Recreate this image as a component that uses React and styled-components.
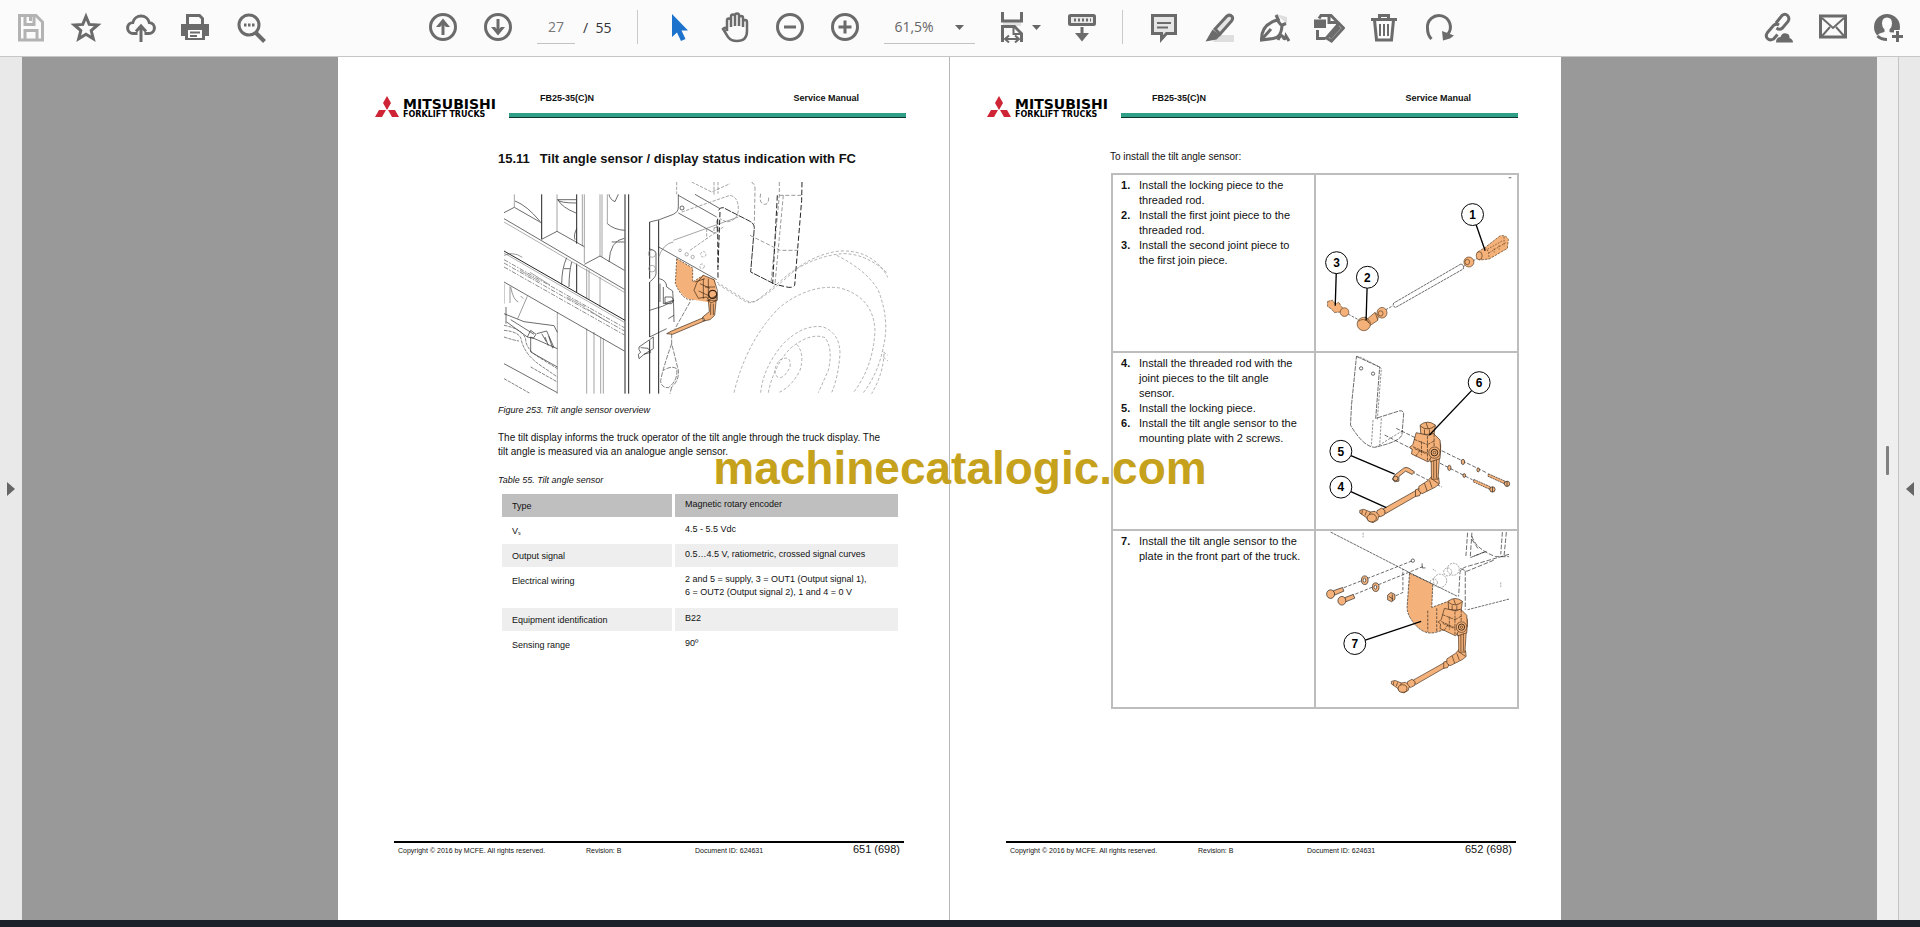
import React from 'react'
import styled, { createGlobalStyle } from 'styled-components'

const GlobalStyle = createGlobalStyle`
  * {
    box-sizing: border-box;
  }
  body {
    margin: 0;
    font-family: 'Liberation Sans', Arial, sans-serif;
    color: #111;
    background-color: #999;
  }
`
const Window = styled.div`
  position: relative;
  display: flex;
  flex-direction: column;
  height: 100vh;
  overflow: hidden;
`

/* toolbar */
const Toolbar = styled.header`
  display: flex;
  align-items: center;
  flex: none;
  height: 57px;
  padding: 0 5px 2px 3px;
  background-color: #fbfbfb;
  border-bottom: 1px solid #c6c6c6;
`
const ToolGroup = styled.div`
  display: flex;
  align-items: center;
  margin-left: ${(props) => props.$space || '0'};
`
const ToolButton = styled.button`
  display: flex;
  align-items: center;
  justify-content: center;
  gap: 4px;
  width: ${(props) => (props.$wide ? '72px' : '55px')};
  height: 40px;
  padding: 0;
  border: 0;
  background: none;
  color: ${(props) => props.$color || '#6b6b6b'};
`
const Icon = styled.svg`
  display: block;
  flex: none;
  width: 32px;
  height: 32px;
  fill: none;
  stroke: currentColor;
  stroke-width: 3;
`
const Caret = styled.svg`
  display: block;
  flex: none;
  width: 9px;
  height: 5px;
  fill: #666;
`
const Separator = styled.div`
  width: 1px;
  height: 34px;
  margin: ${(props) => props.$margin};
  background-color: #c9c9c9;
`
const PageInput = styled.input`
  width: 38px;
  height: 34px;
  margin: 0 8px 0 12px;
  padding: 0;
  border: 0;
  border-bottom: 1px solid #c2c2c2;
  background: none;
  color: #777;
  font: 14px 'Open Sans', sans-serif;
  text-align: center;
`
const PageTotal = styled.span`
  color: #333;
  font: 14px 'Open Sans', sans-serif;
  white-space: pre;
`
const ZoomField = styled.div`
  display: flex;
  align-items: center;
  position: relative;
  margin: 0 7px 0 12px;

  ${Caret} {
    position: absolute;
    right: 11px;
    pointer-events: none;
  }
`
const ZoomSelect = styled.select`
  width: 91px;
  height: 34px;
  padding: 0 0 0 10px;
  border: 0;
  border-bottom: 1px solid #c2c2c2;
  border-radius: 0;
  appearance: none;
  background: none;
  color: #666;
  font: 14px 'Open Sans', sans-serif;
`

/* document area */
const Workspace = styled.main`
  display: flex;
  flex: 1;
  min-height: 0;
`
const SidePanel = styled.aside`
  display: flex;
  align-items: center;
  justify-content: center;
  flex: none;
  width: 22px;
  background-color: #e9e9e9;
  border-left: ${(props) => (props.$line ? '1px solid #c4c4c4' : '0')};
`
const PanelToggle = styled.button`
  padding: 0;
  border: 0;
  background: none;
`
const PanelArrow = styled.svg`
  display: block;
  width: 8px;
  height: 14px;
  fill: #666;
`
const Scrollbar = styled.div`
  flex: none;
  width: 21px;
  padding-top: 389px;
  background-color: #efefef;
`
const Thumb = styled.div`
  width: 3px;
  height: 29px;
  margin: 0 auto;
  border-radius: 1px;
  background-color: #808080;
`
const Desk = styled.div`
  display: flex;
  justify-content: center;
  flex: 1;
  min-width: 0;
  background-color: #999;
`
const Spread = styled.div`
  display: flex;
  width: 100%;
  max-width: 1223px;
  background-color: #fff;
`
const Page = styled.article`
  display: flex;
  flex-direction: column;
  flex: 1;
  min-width: 0;

  & + & {
    border-left: 1px solid #b8b8b8;
  }
`
const PageHeader = styled.div`
  display: flex;
  align-items: flex-end;
  gap: 11px;
  padding: 35px 43px 0 37px;
`
const Logo = styled.svg`
  flex: none;
  width: 123px;
  height: 23px;
`
const HeaderInfo = styled.div`
  flex: 1;
  border-bottom: 1px solid #10332d;
`
const HeaderText = styled.div`
  display: flex;
  justify-content: space-between;
  padding: 0 47px 9px 31px;
  border-bottom: 4px solid #2f9f87;
  font-size: 9px;
  font-weight: bold;
  line-height: 12px;
`
const PageBody = styled.section`
  padding: 32px 43px 0 160px;
`
const Heading = styled.h2`
  display: flex;
  gap: 10px;
  margin: 0;
  font-size: 13px;
  line-height: 18px;
`
const Figure = styled.figure`
  margin: 0;
`
const Overview = styled.svg`
  display: block;
  width: calc(100% - 24px);
  margin: 14px 0 10px 6px;
`
const Caption = styled.figcaption`
  font-size: 9px;
  font-style: italic;
  line-height: 12px;
`
const Text = styled.p`
  margin: ${(props) => props.$margin || '0'};
  font-size: 10px;
  line-height: 14px;
`
const SpecTable = styled.table`
  width: calc(100% - 6px);
  margin: 0 5px 0 1px;
  border-spacing: 3px 2px;
  font-size: 9px;
  line-height: 13px;

  caption {
    margin: 0 0 6px -1px;
    font-style: italic;
    line-height: 12px;
    text-align: left;
  }
`
const SpecRow = styled.tr`
  height: ${(props) => (props.$tall ? '37px' : '23px')};
  background-color: ${(props) => props.$bg || 'transparent'};
`
const SpecName = styled.th`
  width: 170px;
  padding: 6px 10px 0;
  font-weight: normal;
  text-align: left;
  vertical-align: top;
`
const SpecValue = styled.td`
  padding: 4px 10px 0;
  vertical-align: top;
`
const StepTable = styled.table`
  width: 100%;
  margin: 9px 0 0 1px;
  border-collapse: collapse;
  table-layout: fixed;
`
const StepCell = styled.td`
  height: 178px;
  padding: 0;
  border: 2px solid #bdbdbd;
  vertical-align: top;
`
const StepList = styled.ol`
  margin: 0;
  padding: 3px 8px;
  list-style: none;
  font-size: 11px;
  line-height: 15px;
`
const Step = styled.li`
  display: flex;

  b {
    flex: none;
    width: 18px;
  }
`
const Drawing = styled.svg`
  display: block;
  width: 100%;
  height: 176px;
  fill: none;
  stroke: #222;
  stroke-width: 2;
`
const PageFooter = styled.footer`
  display: grid;
  grid-template-columns: 188px 109px 1fr auto;
  align-items: baseline;
  margin: auto 45px 63px 56px;
  padding: 0 4px;
  border-top: 2px solid #000;
  font-size: 7px;
  line-height: 12px;
`
const PageNumber = styled.span`
  font-size: 11px;
`
const Watermark = styled.div`
  position: absolute;
  top: 442px;
  left: 0;
  right: 0;
  color: #c6a21c;
  font-size: 46px;
  font-weight: bold;
  line-height: 52px;
  text-align: center;
  pointer-events: none;
`
const Taskbar = styled.div`
  flex: none;
  height: 7px;
  background-color: #1d2129;
`

const ORANGE = '#f4b27a'

const icons = {
  save: (
    <>
      <path d="M4.500 4.500h16.500l6.500 6.500v18h-23z" />
      <path d="M10 5v8.500h9v-8.500M15.500 6v4M10 29v-9.500h12v9.500" />
    </>
  ),
  star: <path d="M16 5.500l3.200 7.900 8.500.6-6.500 5.500 2.100 8.300-7.300-4.600-7.300 4.600 2.100-8.300-6.500-5.500 8.500-.6z" />,
  upload: (
    <>
      <path d="M12.500 22.500H8.500a5.500 5.500 0 0 1-.7-11a8.500 8.500 0 0 1 16.500 0a5.500 5.500 0 0 1-.8 11h-4" />
      <path d="M16 31V16M11 20.500l5-5.500 5 5.500" />
    </>
  ),
  print: (
    <>
      <path d="M7.500 13V4.500h12l3 3V13" />
      <path d="M1 13h28v12h-4v4H5v-4H1z" fill="currentColor" stroke="none" />
      <path d="M8 19h14v8H8z" fill="#fff" stroke="none" />
      <path d="M10 21.500h10M10 25h7" strokeWidth="2" />
    </>
  ),
  search: (
    <>
      <circle cx="14" cy="14" r="10" />
      <path d="M20.500 21.500l9 9" strokeWidth="4" />
      <path d="M9 14h2.500M13 14h2.500M17 14h2.500" />
    </>
  ),
  up: (
    <>
      <circle cx="16" cy="16" r="12.500" />
      <path d="M16 24V12" />
      <path d="M9 16l7-8.500 7 8.500h-4l-3-3-3 3z" fill="currentColor" stroke="none" />
    </>
  ),
  down: (
    <>
      <circle cx="16" cy="16" r="12.500" />
      <path d="M16 8v12" />
      <path d="M9 16l7 8.500 7-8.500h-4l-3 3-3-3z" fill="currentColor" stroke="none" />
    </>
  ),
  cursor: <path d="M8 3l16 16.500h-6.500l4 8.500-4.500 2-4-8.500L8 26z" fill="currentColor" stroke="none" />,
  hand: (
    <path
      d="M8 20V9.500a2 2 0 0 1 4 0V16V5.500a2 2 0 0 1 4 0V15V4.500a2 2 0 0 1 4 0V15V7a2 2 0 0 1 4 0V16V11a2 2 0 0 1 4 0V20q0 10-10 10q-6 0-9-4l-5-8q3-3 4 2z"
      strokeWidth="2.500"
    />
  ),
  minus: (
    <>
      <circle cx="16" cy="16" r="12.500" />
      <path d="M10 16h12" />
    </>
  ),
  plus: (
    <>
      <circle cx="16" cy="16" r="12.500" />
      <path d="M9.500 16h13M16 9.500v13" />
    </>
  ),
  fit: (
    <>
      <path d="M7 11h18v4H7z" fill="#e2e2e2" stroke="none" />
      <path d="M6.500 1v9h19V1M6.500 31V15.500h12l7 7V31" />
      <path d="M17.500 15v8h8M10 28h12M13 24.500l-4 3.500 4 3.500M19 24.500l4 3.500-4 3.500" strokeWidth="2" />
    </>
  ),
  keyboard: (
    <>
      <rect x="3.500" y="4.500" width="25" height="9" rx="1" fill="#e8e8e8" />
      <path d="M8 9h2M12 9h2M16 9h2M20 9h2M24 9h1M16 16v10" />
      <path d="M9 22h14l-7 8.500z" fill="currentColor" stroke="none" />
    </>
  ),
  comment: (
    <>
      <path d="M4.500 4.500h23v18h-9l-5 5.500v-5.500h-9z" fill="#e6e6e6" />
      <path d="M9 12h14M9 16.500h11" strokeWidth="2" />
    </>
  ),
  highlight: (
    <>
      <path d="M12 24h19v7H10z" fill="#dedede" stroke="none" />
      <path d="M12 18L24 5q3-2 5 0.500q1.500 2-.5 4.500L17 23z" fill="#e4e4e4" />
      <path d="M9.500 18.500l8 6-4 4-11 2z" fill="currentColor" stroke="none" />
    </>
  ),
  sign: (
    <>
      <path d="M18 3l11 10V6z" fill="#dedede" stroke="none" />
      <path d="M18 4l3 6M28 12.500l-5 2M19 9l5 6q-1 12-9 12.500L3.500 29Q3 14 19 9z" />
      <path d="M4 28l9-10M20 29q3-7 5-3t3-1l3 5" strokeWidth="3" />
    </>
  ),
  stamp: (
    <>
      <path d="M1 8.500h12v8.500H1z" fill="currentColor" stroke="none" />
      <path d="M6 7.500L8 4.500h10l6.500 6.500v3M16 4.500v7h8M4.500 19v8.500h8" />
      <path d="M26 12.500l4.500 4.500-12 13-5-3zM17 27l10-11" strokeWidth="3" />
    </>
  ),
  trash: (
    <>
      <path d="M3 8.500h26M11.500 7V4.500h9V7M6.500 9l2 20h15l2-20" />
      <path d="M12 13v12M16 13v12M20 13v12" strokeWidth="2" />
    </>
  ),
  rotate: (
    <>
      <path d="M8.500 28Q4.500 24 4.500 17.500A11.500 11.500 0 1 1 25 23" />
      <path d="M19 20l12 4.500-4 3-7 2z" fill="currentColor" stroke="none" />
    </>
  ),
  link: (
    <>
      <path d="M14 12l6-7.500q3-2.500 5.500 0t.5 6l-5.500 6.500q-3 2.500-6 0M17 14q-3-2-5.500.5l-6 7q-2.500 3.500 0 6t6 .5l4-4.500" />
      <path d="M14 31.500q0-5 4.500-5.500q1.500-5 6-3.500q3.500 1 3 4.500q3.500 1 3.500 4.500z" fill="currentColor" stroke="none" />
    </>
  ),
  mail: (
    <>
      <rect x="3.500" y="5" width="25" height="21" />
      <path d="M5 7l11 10L27 7M5 25l8-9M27 25l-8-9" strokeWidth="2" />
    </>
  ),
  user: (
    <>
      <circle cx="15" cy="16" r="13" fill="currentColor" stroke="none" />
      <path
        d="M15 6.500q5 0 5 6q0 4-2.500 6v2.500q6 1 7.500 4q-4 4.500-10 4.500t-10-4.500q1.500-3 7.500-4v-2.500q-2.500-2-2.500-6q0-6 5-6z"
        fill="#fbfbfb"
        stroke="none"
      />
      <path d="M5.500 25Q9 28.500 15 28.500" />
      <path d="M25.500 19v12M19.500 25h12" stroke="#fbfbfb" strokeWidth="7" />
      <path d="M25.500 20v11M20 25.500h11" />
    </>
  ),
}

function Tool({ name, label, color, caret }) {
  return (
    <ToolButton type="button" aria-label={label} $color={color} $wide={caret}>
      <Icon viewBox="0 0 32 32">{icons[name]}</Icon>
      {caret && (
        <Caret viewBox="0 0 9 5">
          <path d="M0 0h9L4.500 5z" />
        </Caret>
      )}
    </ToolButton>
  )
}

function TopBar() {
  return (
    <Toolbar>
      <ToolGroup>
        <Tool name="save" label="Save" color="#b3b3b3" />
        <Tool name="star" label="Bookmark" />
        <Tool name="upload" label="Upload" />
        <Tool name="print" label="Print" />
        <Tool name="search" label="Find" />
      </ToolGroup>
      <ToolGroup $space="137px">
        <Tool name="up" label="Previous page" />
        <Tool name="down" label="Next page" />
        <PageInput aria-label="Page" defaultValue="27" />
        <PageTotal>{'/  55'}</PageTotal>
        <Separator $margin="0 14px 0 26px" />
        <Tool name="cursor" label="Select" color="#1d72cc" />
        <Tool name="hand" label="Pan" />
        <Tool name="minus" label="Zoom out" />
        <Tool name="plus" label="Zoom in" />
        <ZoomField>
          <ZoomSelect aria-label="Zoom">
            <option>61,5%</option>
          </ZoomSelect>
          <Caret viewBox="0 0 9 5">
            <path d="M0 0h9L4.500 5z" />
          </Caret>
        </ZoomField>
        <Tool name="fit" label="Fit page" caret />
        <Tool name="keyboard" label="Read mode" />
        <Separator $margin="0 13px" />
        <Tool name="comment" label="Comment" />
        <Tool name="highlight" label="Highlight" />
        <Tool name="sign" label="Sign" />
        <Tool name="stamp" label="Edit pages" />
        <Tool name="trash" label="Delete" />
        <Tool name="rotate" label="Rotate" />
      </ToolGroup>
      <ToolGroup $space="auto">
        <Tool name="link" label="Share link" />
        <Tool name="mail" label="Send by mail" />
        <Tool name="user" label="Invite" />
      </ToolGroup>
    </Toolbar>
  )
}

function BrandLogo() {
  return (
    <Logo viewBox="0 0 123 23">
      <path d="M12 1l4 7-4 7-4-7zM11 15l-4 7H0l4-7zM13 15l4 7h7l-4-7z" fill="#cf2435" />
      <g fontFamily="DejaVu Sans, sans-serif" fontWeight="bold" fill="#000">
        <text x="28" y="14" fontSize="14">MITSUBISHI</text>
        <text x="28" y="22" fontSize="8">FORKLIFT TRUCKS</text>
      </g>
    </Logo>
  )
}

function ManualPage({ number, children }) {
  return (
    <Page>
      <PageHeader>
        <BrandLogo />
        <HeaderInfo>
          <HeaderText>
            <span>FB25-35(C)N</span>
            <span>Service Manual</span>
          </HeaderText>
        </HeaderInfo>
      </PageHeader>
      <PageBody>{children}</PageBody>
      <PageFooter>
        <span>Copyright © 2016 by MCFE. All rights reserved.</span>
        <span>Revision: B</span>
        <span>Document ID: 624631</span>
        <PageNumber>{number} (698)</PageNumber>
      </PageFooter>
    </Page>
  )
}

function TruckDrawing() {
  return (
    <Overview viewBox="42 125 1152 635" fill="none" stroke="#222" strokeWidth="2">
      {/* mast rails */}
      <path d="M155 162V297M260 162V310M260 370V455M405 162V760M416 162V760M506 240V760M479 245V415M479 425V590M479 600V760" strokeWidth="3" />
      <path
        d="M73 162V200M201 162V273M283 162V368M277 162V318M330 162V348M336 162V350M352 162V250M202 515V760M290 565V760M332 590V760M340 595V760M290 385V475M297 388V478M330 410V500M312 575V760"
        stroke="#777"
      />
      {/* cross beams */}
      <path d="M42 217L73 201L155 248M155 297L201 273L283 319M283 372L330 347L403 390M42 235L403 447M42 425L403 632M42 670L202 757" />
      <path d="M42 332L405 540" strokeWidth="3" />
      <path d="M42 245L403 456M42 338L403 546" stroke="#888" />
      <path d="M42 358L403 562M42 368L403 572M42 380L403 584" stroke="#555" strokeDasharray="14 4 5 4" />
      <path d="M90 390l60 34M120 396l60 38M230 470l55 30M290 505l60 38" stroke="#777" />
      {/* chassis behind the rails */}
      <path d="M75 182Q110 195 150 243M203 178h55M203 178q6 10 55 10M203 178q14 24 55 40M255 298Q250 285 260 265M215 432Q215 385 230 352M237 440Q237 395 245 365M222 385h18M352 250q20 18 52 20M357 162q2 15 18 22l10-22M357 365Q360 300 403 294M365 305h38" />
      <path d="M42 430v60M60 438v50M62 440Q70 480 85 485M83 535L112 468M100 475l-8-8M42 345q20-10 40-2l15 8" stroke="#666" />
      <path d="M42 520l60 24 90 12 10 20M48 500v50M50 545L112 590M62 538L132 582M112 590l10-20 16 12-8 12zM122 590V635L202 680M122 590L202 625M140 580l30-8 22 50M155 580l14 24M165 590l10 26M176 588l12 36" />
      <path d="M42 555q60 12 65 44q2 28 40 52l55 34M42 570q50 5 52 30q10 40 50 70l58 40M42 590q30 10 45 12M122 680L202 725M42 715L118 758" strokeDasharray="10 3" stroke="#444" />
      {/* front plate and bracket */}
      <path d="M479 245L508 238L550 222Q565 215 565 200V162M565 165L680 230M565 218L670 276M615 162L690 205M479 425Q498 410 498 400V340Q498 330 479 326M479 510Q520 500 550 482M506 320L680 418" />
      <path d="M550 300L745 230M506 350Q520 310 550 305" stroke="#777" />
      <circle cx="576" cy="203" r="6" />
      <path d="M560 125V162M605 125L665 155L720 130M672 125V165M684 125V160M575 215L720 165Q745 170 745 205Q745 240 710 245L690 235M600 330L700 260M650 265v30M680 240v30M672 262h10v16h-10z" strokeDasharray="10 4" stroke="#777" />
      <path d="M683 235L684 415M690 215L684 380" strokeWidth="3" strokeDasharray="16 7" />
      <path d="M686 210Q690 200 700 202L780 243Q793 250 793 262L782 395L855 432" strokeWidth="3" strokeDasharray="20 3" stroke="#333" />
      <path d="M784 125Q796 130 795 150L793 250M868 125V165L843 430M880 165L855 430M812 160q-6 30 12 32q12 0 12-20M868 165h68M780 285L870 330H925" stroke="#666" strokeDasharray="12 6" />
      <path d="M936 125L935 180L914 435Q910 442 895 441L855 432M862 165L848 430" strokeWidth="3" strokeDasharray="16 7" />
      {/* bolts */}
      <g stroke="#888">
        <circle cx="570" cy="330" r="4" />
        <circle cx="590" cy="342" r="5" />
        <circle cx="608" cy="350" r="5" />
        <circle cx="640" cy="342" r="8" strokeDasharray="8 4" />
        <circle cx="636" cy="378" r="7" strokeDasharray="8 4" />
        <circle cx="486" cy="340" r="11" />
        <circle cx="486" cy="385" r="10" />
      </g>
      {/* lower bracket and latch */}
      <path d="M508 415Q530 420 530 440L548 452Q552 500 552 545M510 430v55M520 440v50l30-10M525 470h20l6 10-6 10h-20zM535 535L552 525M479 590L530 565M447 620L479 598L490 590V625L462 642L447 655L445 642L452 636L447 628zM452 622l22 2 8 12-20 6" />
      <path d="M545 580V610L565 690Q568 720 545 740M545 610Q520 680 512 720Q512 742 535 742Q565 720 560 685Q545 675 520 690M545 740L540 760M600 485L555 565" strokeDasharray="14 4" stroke="#444" />
      {/* front wheel */}
      <g stroke="#888" strokeDasharray="9 6">
        <path d="M680 425L760 475Q780 492 805 478Q850 450 920 385Q980 340 1050 332Q1150 328 1194 412" />
        <path d="M684 432L765 483Q785 495 812 472L900 398Q980 345 1060 340Q1130 340 1194 400" />
        <path d="M1040 345Q1130 390 1165 450Q1200 540 1180 620Q1165 700 1118 760M1182 640Q1180 700 1145 760" />
        <path d="M732 757Q770 600 870 500Q960 430 1050 443Q1150 470 1155 570Q1150 680 1090 757" />
        <path d="M812 757Q820 680 880 610Q940 550 1000 560Q1050 580 1050 640Q1045 710 1025 757" />
        <path d="M835 757Q850 680 900 625Q960 575 1005 592Q1030 625 1015 690L985 757" />
        <path d="M920 612Q945 640 930 690Q905 740 865 757M868 660Q905 640 900 680Q880 720 862 710Q845 690 868 660" />
        <path d="M1180 635l14 10M1180 650l14 12" />
      </g>
      {/* highlighted sensor */}
      <g fill={ORANGE} stroke="#3a2412">
        <path d="M560 355L608 383V425L640 405L675 418L680 460L672 488L610 478Q580 480 556 430z" stroke="none" />
        <path d="M655 480L680 465L674 525L660 538L640 542L638 530L658 514zM640 532L545 572L530 580L548 582L645 541z" />
        <path d="M560 355L556 430Q580 485 610 478M560 355L608 383V425L640 405" fill="none" strokeDasharray="6 4" />
        <path d="M640 405L672 418L682 450V480L662 488L650 470L625 474L612 450L620 428zM630 430l30 14M626 452l30 14M640 415v60M655 415v60M645 440h30M615 425l30-10M650 480h28M662 490v34M670 490v34" fill="none" />
        <circle cx="668" cy="462" r="12" fill="none" strokeWidth="4" />
      </g>
    </Overview>
  )
}

function Callout({ x, y, to, children }) {
  return (
    <g stroke="#000" strokeWidth="3">
      <path d={`M${x} ${y}L${to}`} strokeWidth="4" />
      <circle cx={x} cy={y} r="33" fill="#fff" />
      <text x={x} y={y + 13} fill="#000" stroke="none" fontSize="36" fontWeight="bold" textAnchor="middle">
        {children}
      </text>
    </g>
  )
}

function SensorUnit({ transform }) {
  return (
    <g transform={transform} fill={ORANGE} stroke="#3a2412">
      {/* rod and ball joint */}
      <path d="M850 478L955 419L962 432L858 492z" />
      <path d="M832 483l14-8 10 8-1 12-14 7-10-8zM948 420l12-4 6 10-6 12-12 2z" />
      <path d="M780 482l12-3 20 8 14-2 12 12-4 14-14 8-14-5-6-10-20-14zM788 482l-2 12M800 485l-4 12M812 487l-4 12" />
      <ellipse cx="816" cy="505" rx="14" ry="12" />
      {/* arm */}
      <path d="M958 410l28-18 12-14 20 6 2 18-12 10-40 20-10-8zM975 400l8 24M990 392l8 22M998 388l20 14" />
      <path d="M995 310h26l-5 78h-20zM1003 325v60M1011 325v60" />
      {/* housing */}
      <path d="M988 262q30-4 36 24l-2 40-30 10z" />
      <path d="M962 225q22-18 46 0l-4 28h-40z" />
      <path d="M962 228q24 18 46-2M975 238v16M990 238v16M980 218l6 18" />
      <path d="M950 248l38 8 14-6 20 20 2 36-14 10-8-4-16 24-50-24 2-14-8-6 10-8z" />
      <path d="M944 268l40 16M940 290l44 20M984 258v74M966 274v42M945 296l36 16M984 284l22-12M962 300l-14 20M1004 252v36" strokeDasharray="10 3" />
      <circle cx="1005" cy="308" r="17" />
      <circle cx="1005" cy="308" r="10" strokeWidth="3" />
      <circle cx="1005" cy="308" r="4" />
    </g>
  )
}

function RodDrawing() {
  return (
    <Drawing viewBox="648 105 606 528">
      <path d="M1229 112h8" />
      <path d="M1090 381L1160 340M745 523L785 545M858 510L880 498" strokeDasharray="8 4" />
      <path d="M1085 372L882 490Q878 500 888 503L1092 387Q1095 374 1085 372z" fill="#fff" strokeDasharray="9 2" />
      <g fill={ORANGE} stroke="#5a3a1c">
        <path d="M1135 336L1158 322L1203 287Q1222 284 1228 298L1225 325L1170 357L1140 360z" strokeDasharray="8 3" />
        <path d="M1158 322l10 14 2 20M1165 328l45-26M1170 338l50-30M1185 325v12M1200 316v12M1215 290v28" strokeDasharray="5 4" />
        <ellipse cx="1140" cy="347" rx="9" ry="12" />
        <circle cx="1109" cy="366" r="15" />
        <ellipse cx="1104" cy="366" rx="7" ry="8" />
        <path d="M683 485l14-4 10 12 10-6 6 12 6 6-8 12-18 1-8-10-12-8z" strokeDasharray="9 2" />
        <circle cx="734" cy="517" r="13" />
        <path d="M800 540l26-22 10 10-2 14-24 16z" />
        <circle cx="792" cy="553" r="20" />
        <path d="M775 545q18-14 34 6M796 530l14 22M826 518l8 22" />
        <ellipse cx="847" cy="519" rx="15" ry="16" />
        <ellipse cx="843" cy="521" rx="7" ry="8" />
      </g>
      <Callout x={1120} y={223} to="1158 332">1</Callout>
      <Callout x={710} y={368} to="706 498">3</Callout>
      <Callout x={803} y={412} to="799 542">2</Callout>
    </Drawing>
  )
}

function Screw({ x, y }) {
  return (
    <g transform={`translate(${x} ${y})`} fill={ORANGE}>
      <path d="M0 0L50 22L48 30L-2 7z" strokeDasharray="6 2" />
      <circle cx="56" cy="30" r="8" />
      <path d="M56 22v16" />
    </g>
  )
}

function SensorDrawing() {
  return (
    <Drawing viewBox="648 9 606 528">
      <path d="M770 18L840 50L828 205L900 182Q914 180 912 195L907 255Q900 275 825 292Q790 290 752 225L755 165z" strokeDasharray="14 3" />
      <path d="M770 18Q780 16 845 54L833 208M820 210L815 288M845 205L840 285M828 292L912 240" strokeDasharray="7 4" stroke="#555" />
      <circle cx="784" cy="54" r="5" />
      <circle cx="820" cy="70" r="5" />
      <path d="M890 235L1165 370M855 255L1120 390M935 365L1028 412" strokeDasharray="12 5" />
      <SensorUnit />
      <path d="M885 376L912 355Q920 350 928 355L945 366L938 374L918 364L898 380V394L885 396L878 388z" fill={ORANGE} />
      <circle cx="888" cy="386" r="7" fill={ORANGE} />
      <Callout x={1140} y={97} to="990 255">6</Callout>
      <Callout x={723} y={304} to="885 373">5</Callout>
      <Callout x={723} y={412} to="860 474">4</Callout>
      <g fill={ORANGE}>
        <ellipse cx="1050" cy="354" rx="5" ry="8" />
        <ellipse cx="1091" cy="336" rx="5" ry="8" />
        <ellipse cx="1095" cy="377" rx="4" ry="6" />
        <ellipse cx="1137" cy="360" rx="4" ry="6" />
      </g>
      <Screw x={1168} y={372} />
      <Screw x={1124} y={389} />
    </Drawing>
  )
}

function MountDrawing() {
  return (
    <Drawing viewBox="648 36 606 528">
      <path d="M692 38L940 165L1075 232" strokeDasharray="9 2" />
      <path d="M690 222L940 124M725 242L975 140M875 236L910 220V150" strokeDasharray="10 5" />
      <path d="M1105 272L1230 240" strokeDasharray="8 3" />
      <path d="M1105 40L1100 110M1118 40L1113 115L1165 95M1118 50Q1130 90 1190 112H1230M1118 60l20 30M1125 110l30-12M1222 38L1215 110M1210 38L1205 105M1230 105L1110 140Q1085 145 1082 160L1078 232M1098 155V272M1083 148l20 8 85-35" strokeDasharray="14 5" />
      <g stroke="#777" strokeDasharray="6 3">
        <circle cx="1062" cy="150" r="18" />
        <circle cx="1045" cy="158" r="12" />
        <circle cx="1022" cy="185" r="20" />
        <circle cx="1003" cy="190" r="11" />
        <path d="M790 40v14M1205 190v14M1000 150l10 6" />
      </g>
      <circle cx="940" cy="124" r="5" />
      <path d="M968 132v14h10" />
      <g fill={ORANGE}>
        <path d="M700 215L728 205L732 216L704 228zM734 236L760 226L765 237L738 248z" />
        <ellipse cx="692" cy="225" rx="12" ry="13" />
        <ellipse cx="726" cy="245" rx="12" ry="13" />
        <ellipse cx="795" cy="183" rx="10" ry="13" />
        <ellipse cx="794" cy="183" rx="4" ry="6" fill="#fff" />
        <ellipse cx="828" cy="204" rx="10" ry="13" />
        <ellipse cx="827" cy="204" rx="4" ry="6" fill="#fff" />
        <path d="M864 228l10-8 12 6v14l-10 8-12-6zM868 232l12 8M878 226v20" />
        <path d="M930 162L1000 195L997 265L1065 240L1075 320L1010 340Q975 350 945 315Q920 285 923 260z" strokeDasharray="8 3" />
        <path d="M985 275V338M1012 268V338" fill="none" strokeDasharray="8 4" />
      </g>
      <SensorUnit transform="translate(142 35) scale(.94)" />
      <Callout x={765} y={374} to="965 307">7</Callout>
    </Drawing>
  )
}

const specs = [
  { name: 'Type', value: 'Magnetic rotary encoder', bg: '#bfbfbf' },
  { name: 'Vₛ', value: '4.5 - 5.5 Vdc' },
  { name: 'Output signal', value: '0.5…4.5 V, ratiometric, crossed signal curves', bg: '#eee' },
  {
    name: 'Electrical wiring',
    value: (
      <>
        2 and 5 = supply, 3 = OUT1 (Output signal 1),
        <br />6 = OUT2 (Output signal 2), 1 and 4 = 0 V
      </>
    ),
    tall: true,
  },
  { name: 'Equipment identification', value: 'B22', bg: '#eee' },
  { name: 'Sensing range', value: '90º' },
]

const procedure = [
  {
    steps: [
      [1, 'Install the locking piece to the threaded rod.'],
      [2, 'Install the first joint piece to the threaded rod.'],
      [3, 'Install the second joint piece to the first join piece.'],
    ],
    drawing: <RodDrawing />,
  },
  {
    steps: [
      [4, 'Install the threaded rod with the joint pieces to the tilt angle sensor.'],
      [5, 'Install the locking piece.'],
      [6, 'Install the tilt angle sensor to the mounting plate with 2 screws.'],
    ],
    drawing: <SensorDrawing />,
  },
  {
    steps: [[7, 'Install the tilt angle sensor to the plate in the front part of the truck.']],
    drawing: <MountDrawing />,
  },
]

export default function App() {
  return (
    <Window>
      <GlobalStyle />
      <TopBar />
      <Workspace>
        <SidePanel>
          <PanelToggle type="button" aria-label="Open left panel">
            <PanelArrow viewBox="0 0 8 14">
              <path d="M0 0l8 7-8 7z" />
            </PanelArrow>
          </PanelToggle>
        </SidePanel>
        <Desk>
          <Spread>
            <ManualPage number="651">
              <Heading>
                <span>15.11</span>
                <span>Tilt angle sensor / display status indication with FC</span>
              </Heading>
              <Figure>
                <TruckDrawing />
                <Caption>Figure 253. Tilt angle sensor overview</Caption>
              </Figure>
              <Text $margin="15px 0">
                The tilt display informs the truck operator of the tilt angle through the truck display. The
                <br />
                tilt angle is measured via an analogue angle sensor.
              </Text>
              <SpecTable>
                <caption>Table 55. Tilt angle sensor</caption>
                <tbody>
                  {specs.map((spec) => (
                    <SpecRow key={spec.name} $bg={spec.bg} $tall={spec.tall}>
                      <SpecName scope="row">{spec.name}</SpecName>
                      <SpecValue>{spec.value}</SpecValue>
                    </SpecRow>
                  ))}
                </tbody>
              </SpecTable>
            </ManualPage>
            <ManualPage number="652">
              <Text>To install the tilt angle sensor:</Text>
              <StepTable>
                <tbody>
                  {procedure.map(({ steps, drawing }) => (
                    <tr key={steps[0][0]}>
                      <StepCell>
                        <StepList>
                          {steps.map(([number, text]) => (
                            <Step key={number}>
                              <b>{number}.</b>
                              <span>{text}</span>
                            </Step>
                          ))}
                        </StepList>
                      </StepCell>
                      <StepCell>{drawing}</StepCell>
                    </tr>
                  ))}
                </tbody>
              </StepTable>
            </ManualPage>
          </Spread>
        </Desk>
        <Scrollbar>
          <Thumb />
        </Scrollbar>
        <SidePanel $line>
          <PanelToggle type="button" aria-label="Open right panel">
            <PanelArrow viewBox="0 0 8 14">
              <path d="M8 0L0 7l8 7z" />
            </PanelArrow>
          </PanelToggle>
        </SidePanel>
      </Workspace>
      <Watermark>machinecatalogic.com</Watermark>
      <Taskbar />
    </Window>
  )
}
